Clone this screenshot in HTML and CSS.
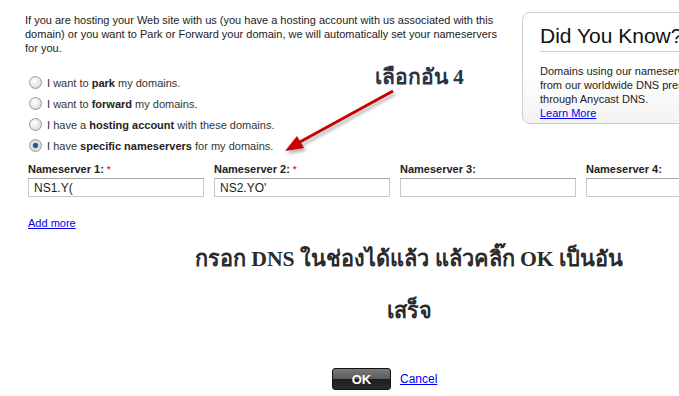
FILE: index.html
```html
<!DOCTYPE html>
<html lang="th">
<head>
  <meta charset="UTF-8">
  <title>Nameservers</title>
  <link rel="stylesheet" href="styles.css">
</head>
<body>
  <div class="page">
    <div class="top">
      <div class="main">
        <p class="intro">If you are hosting your Web site with us (you have a hosting account with us associated with this domain) or you want to Park or Forward your domain, we will automatically set your nameservers for you.</p>

        <div class="options">
          <label class="option"><input type="radio" name="ns"> I want to <b>park</b> my domains.</label>
          <label class="option"><input type="radio" name="ns"> I want to <b>forward</b> my domains.</label>
          <label class="option"><input type="radio" name="ns"> I have a <b>hosting account</b> with these domains.</label>
          <label class="option"><input type="radio" name="ns" checked> I have <b>specific nameservers</b> for my domains.</label>
        </div>
      </div>

      <div class="know">
        <h2>Did You Know?</h2>
        <p>Domains using our nameservers benefit from our worldwide DNS presence through Anycast DNS.<br><a href="#">Learn More</a></p>
      </div>
    </div>

    <div class="servers">
      <div class="server">
        <div class="server-label">Nameserver 1: <span class="req">*</span></div>
        <input type="text" value="NS1.Y(">
      </div>
      <div class="server">
        <div class="server-label">Nameserver 2: <span class="req">*</span></div>
        <input type="text" value="NS2.YO'">
      </div>
      <div class="server">
        <div class="server-label">Nameserver 3:</div>
        <input type="text">
      </div>
      <div class="server">
        <div class="server-label">Nameserver 4:</div>
        <input type="text">
      </div>
    </div>

    <a class="add-more" href="#">Add more</a>

    <div class="note">กรอก DNS ในช่องได้แล้ว แล้วคลิ๊ก OK เป็นอัน เสร็จ</div>

    <div class="actions">
      <button class="ok">OK</button>
      <a href="#">Cancel</a>
    </div>
  </div>

  <!-- annotation drawn over the form -->
  <div class="callout">เลือกอัน 4</div>
  <svg class="arrow" width="679" height="396" viewBox="0 0 679 396">
    <defs>
      <filter id="shade" x="-20%" y="-20%" width="140%" height="140%">
        <feGaussianBlur stdDeviation="1.5"/>
      </filter>
    </defs>
    <g transform="translate(2,3)" fill="#888" stroke="#888" opacity="0.6" filter="url(#shade)">
      <line x1="393" y1="91" x2="298" y2="143" stroke-width="3"/>
      <polygon points="285,151 297,136 304,148" stroke="none"/>
    </g>
    <line x1="393" y1="91" x2="298" y2="143" stroke="#c80000" stroke-width="3"/>
    <polygon points="285,151 297,136 304,148" fill="#c80000"/>
  </svg>
</body>
</html>
```

FILE: styles.css
```css
html, body {
  margin: 0;
  overflow: hidden;
}
body {
  font-family: Arial, "Liberation Sans", sans-serif;
  font-size: 11px;
  color: #333;
  background: #fff;
  position: relative;
}
a {
  color: #0000ee;
}
.page {
  padding: 12px 0 0 25px;
  width: 900px;
}
.top {
  display: flex;
  align-items: flex-start;
}
.main {
  width: 480px;
  margin-right: 17px;
}
.intro {
  margin: 1px 0 0;
  line-height: 14px;
  color: #222;
}
.options {
  margin-top: 18px;
  padding-left: 4px;
}
.option {
  display: block;
  height: 21px;
  line-height: 21px;
  color: #333;
}
.option b {
  color: #222;
}
.option input {
  appearance: none;
  display: inline-block;
  vertical-align: -2px;
  width: 13px;
  height: 13px;
  margin: 0 2px 0 0;
  border: 1px solid #9a9a9a;
  border-radius: 50%;
  background: radial-gradient(circle at 40% 35%, #fff 0, #e6e6e6 55%, #c9c9c9 100%);
}
.option input:checked {
  background: radial-gradient(circle, #1b3f6e 0, #2f6fb0 30%, #e6e6e6 42%, #cfcfcf 100%);
}
.know {
  width: 220px;
  height: 112px;
  border: 1px solid #cfcfcf;
  border-radius: 8px;
  padding: 0 0 0 17px;
  background: linear-gradient(#fff 55%, #f3f3f3);
  box-sizing: border-box;
}
.know h2 {
  margin: 11px 0 0;
  font-size: 21px;
  font-weight: normal;
  color: #111;
  line-height: 24px;
  padding-bottom: 3px;
  border-bottom: 1px solid #ccc;
}
.know p {
  margin: 12px 0 0;
  width: 195px;
  line-height: 14px;
  color: #222;
}
.servers {
  display: flex;
  gap: 10px;
  margin-top: 5px;
  padding-left: 3px;
}
.server-label {
  font-weight: bold;
  color: #222;
  line-height: 14px;
  margin-bottom: 2px;
}
.req {
  color: #e0304a;
  font-size: 9px;
  vertical-align: top;
}
.server input {
  width: 176px;
  height: 19px;
  box-sizing: border-box;
  border: 1px solid #c8c8c8;
  border-top-color: #a8a8a8;
  padding: 0 5px;
  font-family: Arial, "Liberation Sans", sans-serif;
  font-size: 12px;
  color: #222;
}
.add-more {
  display: inline-block;
  margin: 19px 0 0 3px;
  line-height: 14px;
}
.note {
  margin: 3px 0 0 164px;
  width: 440px;
  text-align: center;
  font-family: "Liberation Serif", serif;
  font-weight: bold;
  font-size: 21.7px;
  line-height: 52px;
  color: #2b2b2b;
}
.actions {
  display: flex;
  align-items: center;
  gap: 9px;
  margin: 31px 0 0 307px;
  font-size: 12px;
}
.ok {
  width: 59px;
  height: 22px;
  border: 1px solid #111;
  border-radius: 3px;
  background: linear-gradient(#7a7a7a, #5a5a5a 50%, #1e1e1e 52%, #2c2c2c);
  color: #fff;
  font-family: Arial, "Liberation Sans", sans-serif;
  font-size: 13px;
  font-weight: bold;
  padding: 0;
}
.callout {
  position: absolute;
  left: 375px;
  top: 63px;
  font-family: "Liberation Serif", serif;
  font-weight: bold;
  font-size: 21px;
  line-height: 28px;
  color: #2a3442;
}
.arrow {
  position: absolute;
  left: 0;
  top: 0;
  pointer-events: none;
}
```
